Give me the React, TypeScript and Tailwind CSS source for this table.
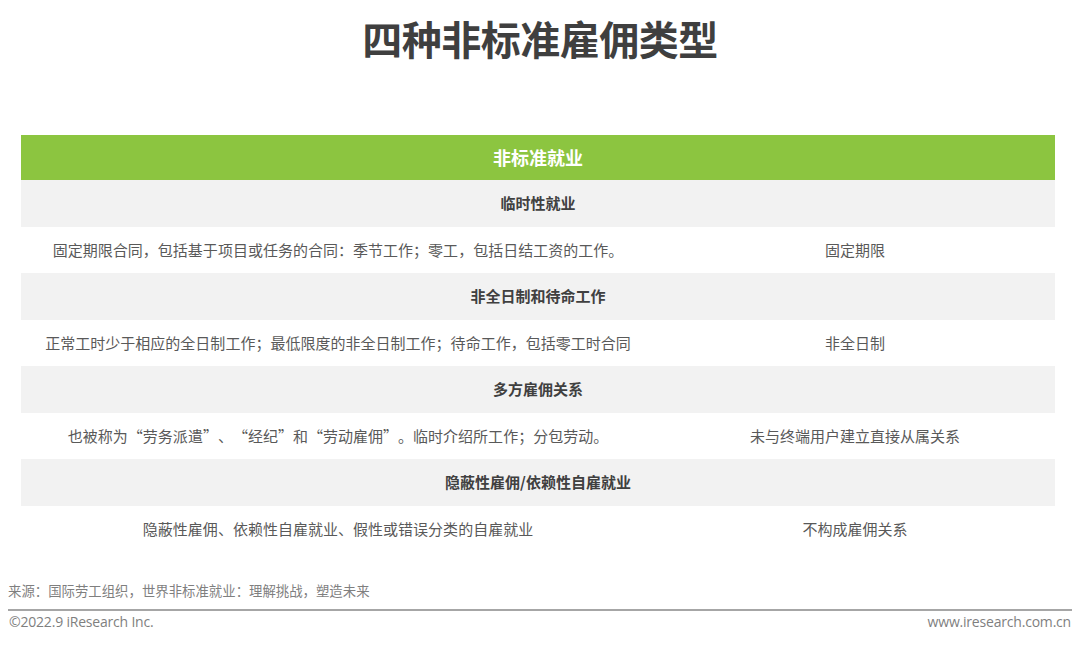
import type { ReactNode } from 'react';

const FONT = "font-['Microsoft_YaHei','Noto_Sans_CJK_SC',sans-serif]";

interface Section {
  readonly title: string;
  readonly detail: string;
  readonly type: string;
}

const SECTIONS: readonly Section[] = [
  {
    title: '临时性就业',
    detail: '固定期限合同，包括基于项目或任务的合同：季节工作；零工，包括日结工资的工作。',
    type: '固定期限',
  },
  {
    title: '非全日制和待命工作',
    detail: '正常工时少于相应的全日制工作；最低限度的非全日制工作；待命工作，包括零工时合同',
    type: '非全日制',
  },
  {
    title: '多方雇佣关系',
    detail: '也被称为“劳务派遣”、“经纪”和“劳动雇佣”。临时介绍所工作；分包劳动。',
    type: '未与终端用户建立直接从属关系',
  },
  {
    title: '隐蔽性雇佣/依赖性自雇就业',
    detail: '隐蔽性雇佣、依赖性自雇就业、假性或错误分类的自雇就业',
    type: '不构成雇佣关系',
  },
];

// full-width curly quotes, the CJK font draws them narrow
function withWideQuotes(text: string): ReactNode[] {
  return Array.from(text).map((ch, i) => {
    if (ch === '“') {
      return <span key={i} className="inline-block w-[15px] text-right">{ch}</span>;
    }
    if (ch === '”') {
      return <span key={i} className="inline-block w-[15px] text-left">{ch}</span>;
    }
    return ch;
  });
}

export default function App() {
  return (
    <div className={`w-[1080px] h-[645px] bg-white flex flex-col ${FONT}`}>
      {/* Title */}
      <h1 className="pt-[17px] h-[135px] text-center text-[40px] leading-[42px] font-bold text-[#3f3f3f] tracking-[-0.5px]">
        四种非标准雇佣类型
      </h1>

      {/* Table */}
      <div className="mx-[21px] w-[1034px] flex flex-col">
        <div className="h-[45px] bg-[#8cc540] flex items-center justify-center text-white text-[18px] font-bold">
          非标准就业
        </div>
        {SECTIONS.map((s) => (
          <div key={s.title} className="flex flex-col">
            <div className="h-[46.5px] bg-[#f2f2f2] flex items-center justify-center text-[15px] font-bold text-[#404040]">
              {s.title}
            </div>
            <div className="h-[46.5px] flex items-center text-[15px] text-[#595959]">
              <div className="w-[634px] text-center">{withWideQuotes(s.detail)}</div>
              <div className="flex-1 text-center">{s.type}</div>
            </div>
          </div>
        ))}
      </div>

      {/* Footer */}
      <div className="mt-[29px] px-[8px] text-[13.4px] leading-[18px] text-[#7f7f7f]">
        来源：国际劳工组织，世界非标准就业：理解挑战，塑造未来
      </div>
      <div className="mx-[8px] mt-[10px] h-[2px] bg-[#a6a6a6]" />
      <div className="mt-[2px] px-[9px] flex justify-between text-[14px] leading-[18px] text-[#7f7f7f] font-['Open_Sans',sans-serif] tracking-[-0.2px]">
        <span>©2022.9 iResearch Inc.</span>
        <span>www.iresearch.com.cn</span>
      </div>
    </div>
  );
}
